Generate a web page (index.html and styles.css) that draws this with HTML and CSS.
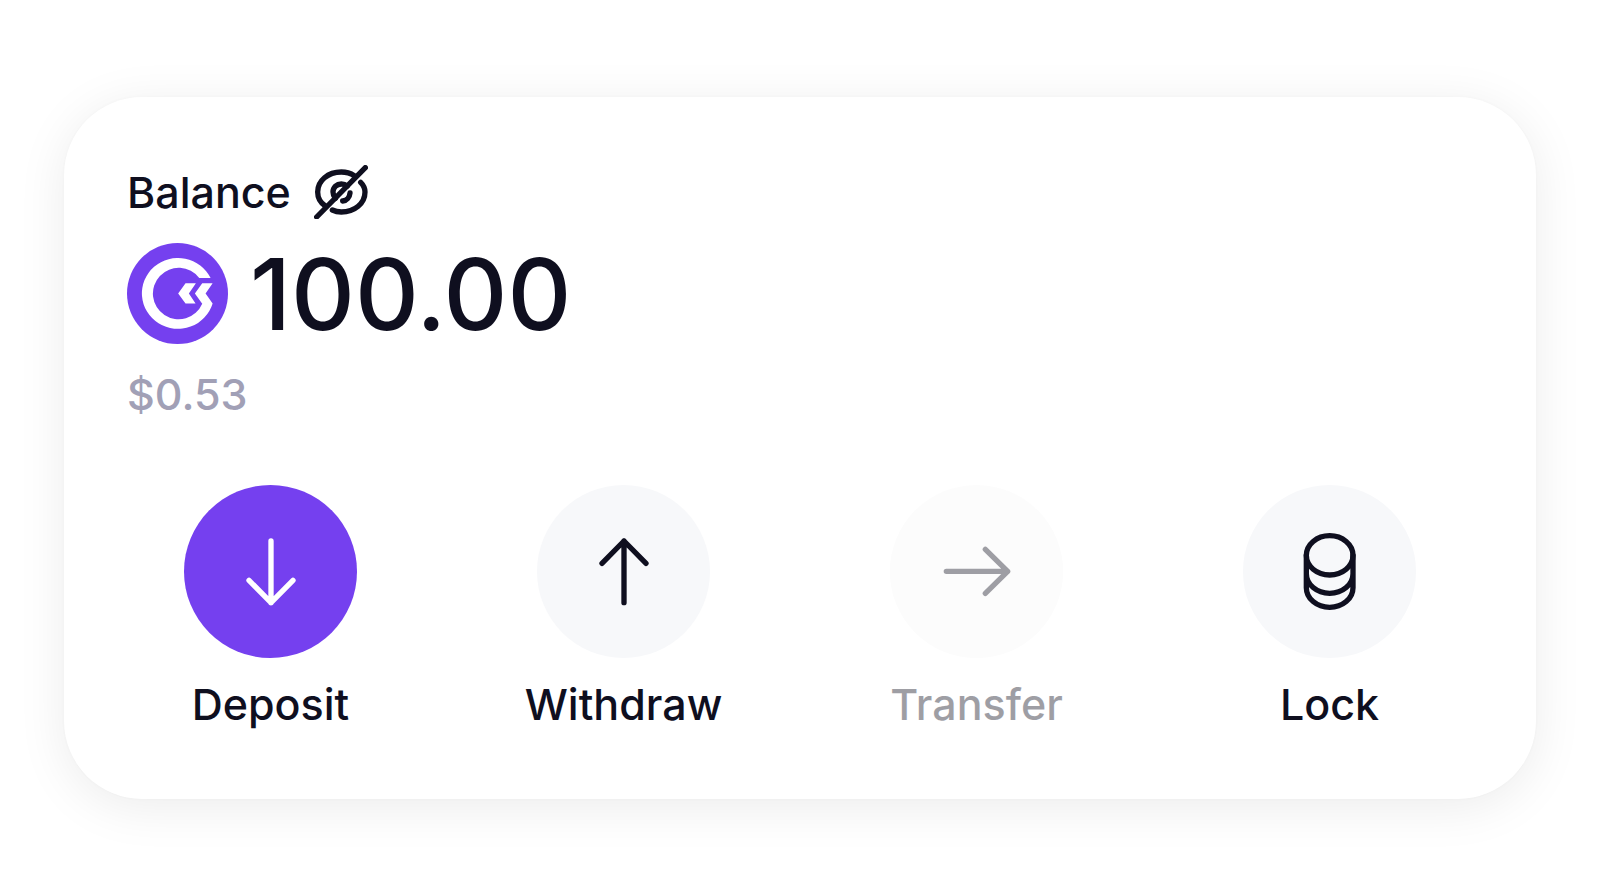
FILE: index.html
```html
<!DOCTYPE html>
<html lang="en">
<head>
<meta charset="utf-8">
<meta name="viewport" content="width=device-width, initial-scale=1">
<title>Balance</title>
<link rel="stylesheet" href="styles.css">
</head>
<body>
<main class="card">
  <section class="summary">
    <div class="heading">
      <h1 class="title">Balance</h1>
      <button class="toggle" type="button" aria-label="Hide balance">
        <svg class="toggle-icon" viewBox="42 27 162 162" aria-hidden="true">
          <path d="M50 183 196 35"/>
          <path d="M76 150C61 140 53 125 53 108C53 74 84 48 124 48C139 48 152 52 163 59"/>
          <path d="M182 79C190 87 195 97 195 108C195 142 164 168 124 168C114 168 105 166 97 162"/>
          <path d="M106 127C102 122 99 115 99 108C99 94 110 84 124 84C131 84 137 86 142 90"/>
          <path d="M150 111C149 123 140 134 128 135"/>
        </svg>
      </button>
    </div>
    <div class="amount-row">
      <svg class="coin" viewBox="20 21 302 302" aria-hidden="true">
        <circle class="coin-bg" cx="171" cy="172" r="151"/>
        <path class="coin-mark" d="M270 126A108 106 0 1 0 276 202L255 172 276 141H245L223 172 245 203A77 77 0 1 1 236 126Z"/>
        <path class="coin-mark" d="M173 172 195 141H226L205 172 225 202H195Z"/>
      </svg>
      <span class="amount">100.00</span>
    </div>
    <p class="fiat">$0.53</p>
  </section>
  <nav class="actions" aria-label="Balance actions">
    <button class="action action-primary" type="button">
      <span class="disc"><svg class="icon" viewBox="-120 -119 240 240" aria-hidden="true"><path d="M0-92V93M-66 26 0 93 66 26"/></svg></span>
      <span class="label">Deposit</span>
    </button>
    <button class="action" type="button">
      <span class="disc"><svg class="icon" viewBox="-120 -119 240 240" aria-hidden="true"><path d="M0 93V-92M-66-25 0-92 66-25"/></svg></span>
      <span class="label">Withdraw</span>
    </button>
    <button class="action" type="button" disabled>
      <span class="disc"><svg class="icon" viewBox="-120 -118 240 240" aria-hidden="true"><path d="M-92 0H92M25-66 92 0 25 66"/></svg></span>
      <span class="label">Transfer</span>
    </button>
    <button class="action" type="button">
      <span class="disc"><svg class="icon" viewBox="180 185 240 240" aria-hidden="true"><ellipse cx="299" cy="255" rx="70" ry="59"/><path d="M229 255V352A70 59 0 0 0 369 352V255M229 310A70 59 0 0 0 369 310"/></svg></span>
      <span class="label">Lock</span>
    </button>
  </nav>
</main>
</body>
</html>
```
FILE: styles.css
```css
* {
  box-sizing: border-box;
}

body {
  margin: 0;
  min-height: 100vh;
  padding: 64px;
  display: flex;
  align-items: center;
  background: #fff;
  color: #0f0f1f;
  font-family: Inter, "Liberation Sans", sans-serif;
  font-size: 43px;
  font-weight: 500;
  line-height: 60px;
}

button {
  margin: 0;
  padding: 0;
  border: 0;
  background: none;
  color: inherit;
  font: inherit;
  cursor: pointer;
}

.card {
  flex: 1;
  padding: 65px 30px;
  border-radius: 78px;
  background: #fff;
  box-shadow: 0 8px 50px rgba(0, 0, 0, 0.08), 0 0 3px rgba(0, 0, 0, 0.03);
}

.summary {
  padding: 0 33px;
}

.heading {
  display: flex;
  align-items: center;
  gap: 23px;
}

.title {
  margin: 0;
  font: inherit;
}

.toggle {
  display: flex;
}

.toggle-icon {
  width: 54px;
  height: 54px;
  fill: none;
  stroke: currentColor;
  stroke-width: 16;
  stroke-linecap: round;
}

.amount-row {
  display: flex;
  align-items: center;
  gap: 22px;
  margin: 21px 0 20px;
}

.coin {
  width: 101px;
  height: 101px;
}

.coin-bg {
  fill: #7540ef;
}

.coin-mark {
  fill: #fff;
}

.amount {
  font-size: 99px;
  line-height: 100px;
}

.fiat {
  margin: 0;
  color: #a1a0b6;
}

.actions {
  display: grid;
  grid-template-columns: repeat(4, 1fr);
  margin-top: 61px;
}

.action {
  display: flex;
  flex-direction: column;
  align-items: center;
  gap: 16px;
}

.action:disabled {
  opacity: 0.4;
  cursor: default;
}

.disc {
  display: flex;
  align-items: center;
  justify-content: center;
  width: 173px;
  height: 173px;
  border-radius: 50%;
  background: #f7f8fa;
}

.action:disabled .disc {
  background: #f8f8f8;
}

.action-primary .disc {
  background: #7540ef;
  color: #fff;
}

.icon {
  width: 80px;
  height: 80px;
  fill: none;
  stroke: currentColor;
  stroke-width: 16;
  stroke-linecap: round;
  stroke-linejoin: round;
}
```
